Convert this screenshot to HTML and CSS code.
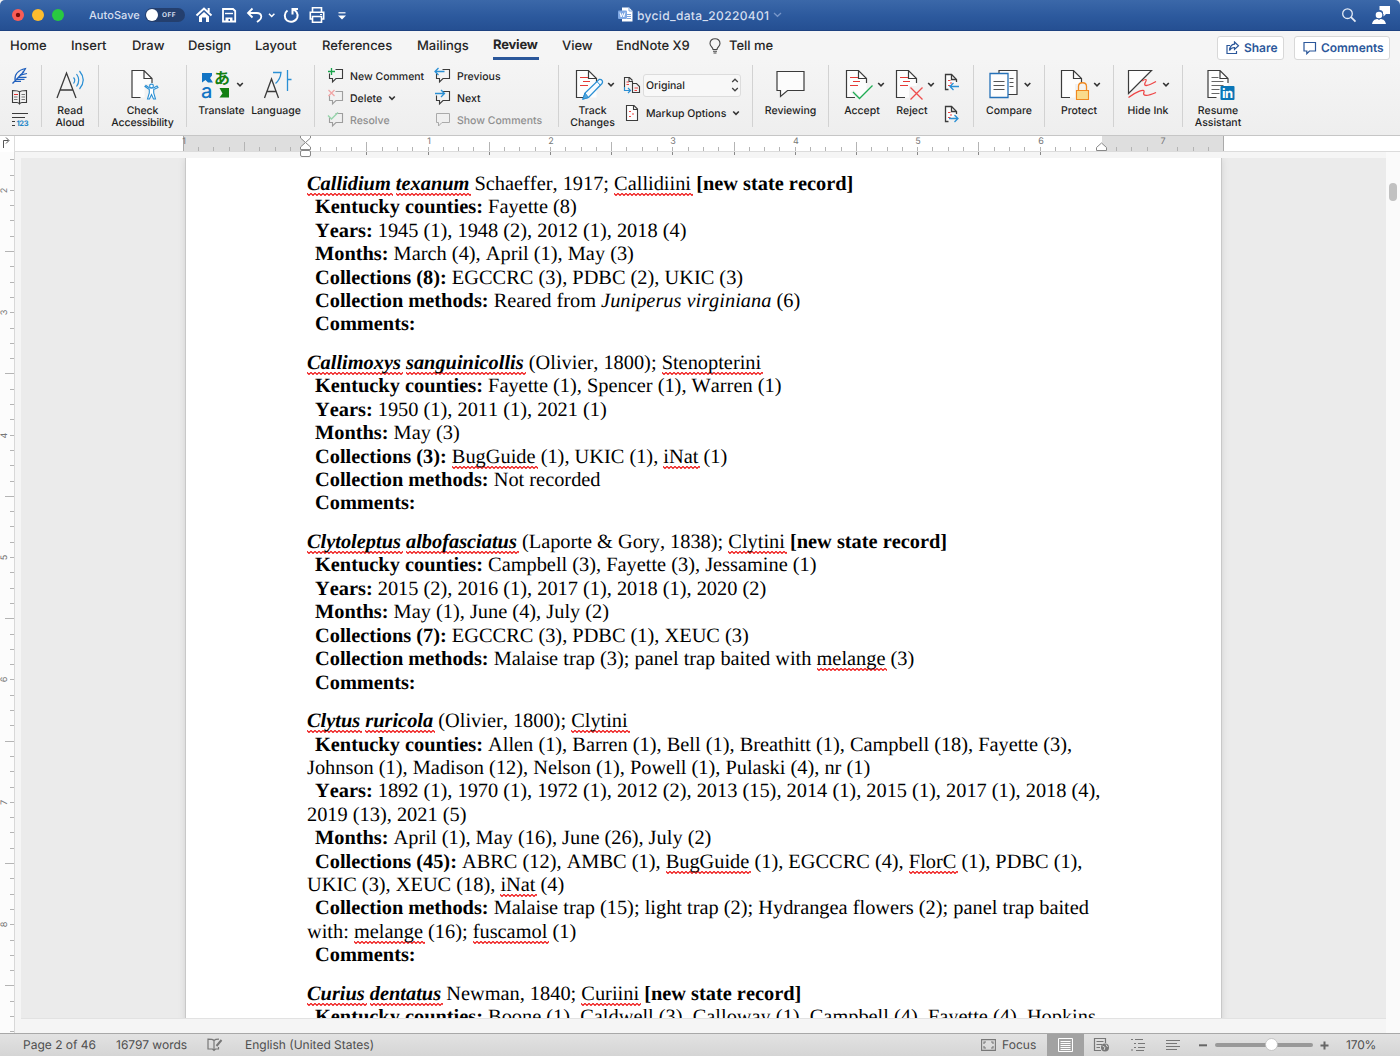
FILE: index.html
```html
<!DOCTYPE html>
<html lang="en">
<head>
<meta charset="utf-8">
<title>bycid_data_20220401</title>
<link rel="stylesheet" href="styles.css">
</head>
<body>
<svg width="0" height="0" class="defs">
  <defs>
    <path id="chev" d="M-2.8-1.5L0 1.3L2.8-1.5" fill="none" stroke="#333" stroke-width="1.6"/>
    <path id="bubble" d="M1.500 5.500V10.500H4.500V14L8 10.500H14.500V1.500H7.500" fill="none" stroke="#3b3b3b" stroke-width="1.1"/>
    <g id="sheet"><path d="M.5.5H12.5L20.500 8.500V27.500H.5Z" fill="#fdfdfd" stroke="none"/><path d="M20.500 13V8.500L12.500.5H.5V27.500H9M12.500.5V8.500H20.500" fill="none" stroke="#3b3b3b" stroke-width="1.2"/></g>
    <g id="minisheet"><path d="M3.500 15.500H.5V.5H6.500L11.500 5.500V8" fill="#fdfdfd" stroke="#3b3b3b"/><path d="M6.500.5V5.500H11" fill="none" stroke="#3b3b3b"/><path d="M3 6.500H5.500M5 9H7M3 11.500H5.500" stroke="#e44" stroke-width="1.2"/></g>
  </defs>
</svg>
<div class="window">
  <header class="titlebar">
    <div class="lights"><i class="red"></i><i class="yellow"></i><i class="green"></i></div>
    <span class="autosave">AutoSave</span>
    <span class="switch"><i></i>OFF</span>
    <svg class="quick" width="160" height="31" viewBox="192 0 160 31" fill="none" stroke="#fff" stroke-width="1.8">
      <path d="M196.500 15.500L204 8.500L211.500 15.500M208.700 8v4" stroke-width="2"/><path d="M199 16.500L204 12L209 16.500V22H206V17.500H202V22H199Z" fill="#fff" stroke="none"/>
      <path d="M223 9H233L235.200 11V21.500H223Z"/><path d="M225.500 17.500H232.500V22H225.500Z" fill="#fff" stroke="none"/><path d="M225 13.500H233" stroke-width="1.400"/><path d="M228.500 19h1.500v2h-1.500z" fill="#2d579b" stroke="none"/>
      <path d="M252.500 8.500L248 13L252.500 17.500M248.500 13H257C262 13 262.500 18 259 20.500L257 22"/>
      <path d="M269 13.800L271.700 16.500L274.400 13.800" stroke-width="1.5"/>
      <path d="M287.500 10.500C284 13 284 18 287 20.500C290.500 23 296 21.500 297.300 17.500C298.500 13.500 296 10.200 292.800 9.300M298 9H292.500V14.500" stroke-width="2"/>
      <path d="M312.500 12V7.800H321.500V12M312.500 19H310.300V12.300H323.700V19H321.500M312.500 16.500H321.500V22.200H312.500Z" stroke-width="1.6"/><path d="M320 14.500h2" stroke-width="1"/>
      <path d="M338.500 12.800H345.500" stroke-width="1.2"/><path d="M338 15.500H346L342 19.500Z" fill="#fff" stroke="none"/>
    </svg>
    <div class="doctitle">
      <svg width="16" height="16" viewBox="0 0 16 16"><path d="M4 .5H11L14.500 4V14.500H4Z" fill="#fff"/><path d="M11 .5V4H14.500M9 7.500H13M9 9.500H13M9 11.500H13" fill="none" stroke="#7da3dc"/><rect y="3.500" width="9" height="8.500" rx="1" fill="#7fa8e4"/><path d="M2 5.500L3.200 10L4.500 6.500L5.800 10L7 5.500" fill="none" stroke="#fff"/></svg>
      <span>bycid_data_20220401</span>
      <svg width="9" height="6" viewBox="0 0 9 6"><path d="M1 1L4.500 4.300L8 1" fill="none" stroke="#7896c8" stroke-width="1.300"/></svg>
    </div>
    <svg class="account" width="60" height="31" viewBox="1340 0 60 31" fill="none" stroke="#e4ebf6" stroke-width="1.300"><circle cx="1347.500" cy="13.700" r="4.800"/><path d="M1351 17.200L1355.500 21.700" stroke-width="1.700"/><g fill="#fff" stroke="none"><path d="M1379.500 6H1390V14H1386L1383.500 16.500V14H1383C1383.500 11.500 1382 10 1379.500 10Z"/><circle cx="1379" cy="15" r="3.300"/><path d="M1372 24C1373 19.500 1376 19 1377.500 19L1379 20L1380.500 19C1382 19 1385 19.500 1386 24Z"/></g></svg>
  </header>

  <nav class="tabs">
    <span class="t1">Home</span><span class="t2">Insert</span><span class="t3">Draw</span><span class="t4">Design</span><span class="t5">Layout</span><span class="t6">References</span><span class="t7">Mailings</span><span class="t8 on">Review</span><span class="t9">View</span><span class="t10">EndNote X9</span>
    <svg class="bulb" width="12" height="16" viewBox="0 0 12 16" fill="none" stroke="#444" stroke-width="1.100"><path d="M4 11.500C4 9 1 8.500 1 5.500C1 2.500 3 .8 6 .8C9 .8 11 2.500 11 5.500C11 8.500 8 9 8 11.500ZM4 13.200H8M4.500 15H7.500"/></svg>
    <span class="tell">Tell me</span>
    <span class="pill share"><svg width="14" height="14" viewBox="0 0 14 14" fill="none" stroke="#2b579a" stroke-width="1.200"><path d="M4 4.500H1V12.500H10.500V10M8.500 1L12.500 4.800L8.500 8.500V6.500C6 6.500 4.500 7.500 3.500 9.500C3.800 6 5.500 3.500 8.500 3.200Z"/></svg>Share</span>
    <span class="pill comments"><svg width="14" height="14" viewBox="0 0 14 14" fill="none" stroke="#2b579a" stroke-width="1.200"><path d="M1 1.500H12.500V10H6.500L3.800 12.700V10H1Z"/></svg>Comments</span>
  </nav>

  <section class="ribbon">
    <div class="group g1">
      <svg width="41" height="66" viewBox="0 64 41 66" fill="none"><path d="M12.500 83.500L24 71.500" stroke="#1f5fbd" stroke-width="1.300"/><path d="M15 80C14.500 74 19 70 25.500 68.500C24.500 71 24 71.500 22.500 72.500" stroke="#1f5fbd" stroke-width="1.200"/><path d="M20 75.200L27 73.500M18.500 77.300H26.500M17 79.300H24.500M15 81.300H21" stroke="#1f5fbd" stroke-width="1.200"/>
      <path d="M19.500 92V104M19.500 92C18.500 90.800 17 90.500 12.500 90.500V102.500H17C18.500 102.500 19.500 104 19.500 104C19.500 104 20.500 102.500 22 102.500H26.500V90.500C22 90.500 20.500 90.800 19.500 92Z" stroke="#3b3b3b" stroke-width="1.100"/><path d="M21.500 94.500H25M21.500 97H25M21.500 99.500H25M14 97H17.500M14 99.500H17.500" stroke="#777"/><path d="M14 94.500H18" stroke="#d33"/>
      <path d="M12 113.500H28M12 117.500H25M12 121.500H15M12 125.500H15" stroke="#3b3b3b" stroke-width="1.100"/><text x="16.500" y="126" font-size="7.500" font-weight="700" fill="#2386c8" textLength="12">123</text></svg>
    </div>
    <div class="group g2"><div class="btn"><svg width="57" height="38" viewBox="42 66 57 38" fill="none" stroke="#3b3b3b" stroke-width="1.300"><path d="M57 98L66.500 73L76 98M60.200 90H72.800"/><path d="M73.500 77.500Q76 80 73.500 83.500M76.500 74Q81 80 76.500 86.500M79.500 71Q87 80 79.500 89" stroke="#2a8fd4" stroke-width="1.200"/></svg><span>Read<br>Aloud</span></div></div>
    <div class="group g3"><div class="btn"><svg width="88" height="38" viewBox="98.500 66 88 38" fill="none"><use href="#sheet" x="131" y="70"/><path d="M144 84L158 84V100H144Z" fill="#f2f2f2"/><g stroke="#2a8fd4" stroke-width="1.100" fill="#fff"><path d="M144.500 86.500L148.800 89.500V93L147 99H149L151 94.500L153 99H155L153.200 93V89.500L157.500 87.500L156.500 86L153 88H149L145.500 85.500Z"/><circle cx="151" cy="86" r="1.900"/></g></svg><span>Check<br>Accessibility</span></div></div>
    <div class="group g4">
      <div class="btn translate"><svg width="50" height="38" viewBox="197 66 50 38" fill="none"><path d="M202 73H212V75.500L210 78L213 82.500H208L205.500 80L202 82.500Z" fill="#1274c4"/><text x="201" y="97.500" font-size="20" font-weight="500" fill="#1274c4">a</text><text x="214" y="83.500" class="cjk" font-size="16" font-weight="700" fill="#138013">あ</text><path d="M219.500 88H229V97.500H219.500L222.500 93.500Z" fill="#138013"/><use href="#chev" x="240" y="84.500"/></svg><span>Translate</span></div>
      <div class="btn language"><svg width="54" height="38" viewBox="249.500 66 54 38" fill="none"><path d="M264 98L271 79L278 98M266.300 91.500H275.700" stroke="#3b3b3b" stroke-width="1.300"/><path d="M272.500 72.500H280.500C280 78 278 81 275 83.500M287 70V91M287 79.500H291" stroke="#2a8fd4" stroke-width="1.300"/></svg><span>Language</span></div>
    </div>
    <div class="group g5">
      <div class="row a"><svg width="18" height="18" viewBox="0 0 18 18"><use href="#bubble" x="1" y="1"/><path d="M4.500 1V8M1 4.500H8" stroke="#18a34a" stroke-width="1.300"/></svg><span>New Comment</span></div>
      <div class="row b"><svg width="18" height="18" viewBox="0 0 18 18"><use href="#bubble" x="1" y="1"/><path d="M1 4.500H10" stroke="#f3f3f3" stroke-width="3"/><path d="M1 4.500H10.500M4.500 1L1 4.500L4.500 8" fill="none" stroke="#2a8fd4" stroke-width="1.300"/></svg><span>Previous</span></div>
      <div class="row a"><svg width="18" height="18" viewBox="0 0 18 18"><g opacity=".45"><use href="#bubble" x="1" y="1"/><path d="M1.500 1L7.500 7M7.500 1L1.500 7" stroke="#f04a4a" stroke-width="1.300"/></g></svg><span>Delete</span><svg class="dd" width="8" height="6" viewBox="-4 -3 8 6"><use href="#chev"/></svg></div>
      <div class="row b"><svg width="18" height="18" viewBox="0 0 18 18"><use href="#bubble" x="1" y="1"/><path d="M1 4.500H11" stroke="#f3f3f3" stroke-width="3"/><path d="M1 4.500H10.500M7 1L10.500 4.500L7 8" fill="none" stroke="#2a8fd4" stroke-width="1.300"/></svg><span>Next</span></div>
      <div class="row a off"><svg width="18" height="18" viewBox="0 0 18 18"><g opacity=".45"><use href="#bubble" x="1" y="1"/><path d="M1 4.500L4.500 8L11 1.500" fill="none" stroke="#2cb55a" stroke-width="1.400"/></g></svg><span>Resolve</span></div>
      <div class="row b off"><svg width="18" height="18" viewBox="0 0 18 18"><path d="M2.500 2.500H15.500V11.500H8L4.500 15V11.500H2.500Z" fill="none" stroke="#aaa"/></svg><span>Show Comments</span></div>
    </div>
    <div class="group g6">
      <div class="btn track"><svg width="60" height="38" viewBox="563 66 60 38" fill="none"><use href="#sheet" x="576" y="70"/><path d="M580 77.500H588M583 81.500H590M580 85.500H588" stroke="#e53935" stroke-width="1.200"/><path d="M583 99L585 93L599 79.500C602 79 603.500 81.500 602 83.500L588.500 97.500Z" fill="#f5fbff" stroke="#2a8fd4" stroke-width="1.300"/><path d="M583 99L585 93L588.500 97.500ZM597 81.500L600.500 85.500" fill="#58a8dc" stroke="#2a8fd4"/><use href="#chev" x="611" y="84.500"/></svg><span>Track<br>Changes</span></div>
      <div class="markup">
        <div class="line"><svg width="20" height="20" viewBox="622 75 20 20" fill="none"><path d="M624.500 87V77.500H629.500L632.500 80.500M629 77.500V81.500H632.500V84M632.500 92.500V83.500H636.500L639.500 86.500V92.500Z" stroke="#3b3b3b" stroke-width="1.100"/><path d="M626.500 82H629M626.500 84.500H629M634.500 88H638M634.500 90.500H637" stroke="#e44"/><path d="M624.500 87V90.500H630M628 88L630.500 90.500L628 93" stroke="#2a8fd4" stroke-width="1.200"/></svg><div class="select"><span>Original</span><svg width="8" height="14" viewBox="0 0 8 14" fill="none" stroke="#444" stroke-width="1.300"><path d="M1.200 4L4 1.200L6.800 4M1.200 10L4 12.800L6.800 10"/></svg></div></div>
        <div class="line two"><svg width="20" height="18" viewBox="622 104 20 18" fill="none"><path d="M626.500 105.500H634L637.500 109V120.500H626.500ZM633.500 105.500V109.500H637.500" fill="#fdfdfd" stroke="#3b3b3b" stroke-width="1.100"/><path d="M629 111.500H631M632 114H634M629 116.500H631" stroke="#e44" stroke-width="1.200"/></svg><span>Markup Options</span><svg class="dd" width="8" height="6" viewBox="-4 -3 8 6"><use href="#chev"/></svg></div>
      </div>
    </div>
    <div class="group g7"><div class="btn"><svg width="76" height="38" viewBox="752.500 66 76 38"><path d="M776.500 71.500H803.500V90.500H787L780 96.500V90.500H776.500Z" fill="#fcfcfc" stroke="#3b3b3b" stroke-width="1.200"/></svg><span>Reviewing</span></div></div>
    <div class="group g8">
      <div class="btn accept"><svg width="50" height="38" viewBox="837 66 50 38" fill="none"><use href="#sheet" x="846" y="70"/><path d="M852 91L860 100L874 86" stroke="#f3f3f3" stroke-width="4"/><path d="M850 77.500H858M853 81.500H860M850 85.500H858" stroke="#e53935" stroke-width="1.200"/><path d="M853 92L859.500 98.500L872.500 85.500" stroke="#1fac54" stroke-width="1.300"/><use href="#chev" x="881" y="84.500"/></svg><span>Accept</span></div>
      <div class="btn reject"><svg width="50" height="38" viewBox="887 66 50 38" fill="none"><use href="#sheet" x="896" y="70"/><path d="M909 86H923V101H909Z" fill="#f2f2f2"/><path d="M900 77.500H908M903 81.500H910M900 85.500H908" stroke="#e53935" stroke-width="1.200"/><path d="M910.500 87.500L922.500 99.500M922.500 87.500L910.500 99.500" stroke="#ee4d4d" stroke-width="1.300"/><use href="#chev" x="931" y="84.500"/></svg><span>Reject</span></div>
      <svg class="stack" width="20" height="60" viewBox="942 66 20 60" fill="none" stroke="#2a8fd4" stroke-width="1.300"><use href="#minisheet" x="945" y="74"/><path d="M950 86.500H959M953.500 83L950 86.500L953.500 90"/><use href="#minisheet" x="945" y="106"/><path d="M949 118.500H958M954.500 115L958 118.500L954.500 122"/></svg>
    </div>
    <div class="group g9"><div class="btn"><svg width="71" height="38" viewBox="973.500 66 71 38" fill="#fdfdfd"><path d="M998.500 70.500H1016.500V94.500H998.500Z" stroke="#3b3b3b" stroke-width="1.200"/><path d="M1009 78.500H1013M1009 82.500H1013M1009 86.500H1013" stroke="#555"/><path d="M989.500 73.500H1007.500V97.500H989.500Z" stroke="#2571b8" stroke-width="1.300"/><path d="M993 81.500H1004M993 85.500H1004M993 89.500H1004" stroke="#555"/><use href="#chev" x="1027" y="84.500"/></svg><span>Compare</span></div></div>
    <div class="group g10"><div class="btn"><svg width="69" height="38" viewBox="1045 66 69 38" fill="none"><use href="#sheet" x="1061" y="70"/><path d="M1075 84H1090V100H1075Z" fill="#f2f2f2"/><path d="M1078.500 90.500V86.500C1078.500 81.500 1086.500 81.500 1086.500 86.500V90.500" stroke="#f18a22" stroke-width="1.300"/><path d="M1076.500 90.500H1088.500V99.500H1076.500Z" fill="#f9db8b" stroke="#f18a22" stroke-width="1.100"/><use href="#chev" x="1097" y="84.500"/></svg><span>Protect</span></div></div>
    <div class="group g11"><div class="btn"><svg width="69" height="38" viewBox="1114 66 69 38" fill="none"><path d="M1128.500 70.500H1151.500L1128.500 93.500Z" fill="#fdfdfd" stroke="#3b3b3b" stroke-width="1.200"/><path d="M1142 81C1147 78 1147 80 1145 83C1143.500 87 1148 86 1156 81.500M1128.500 97.500C1136 92 1145 88 1144 92C1142 97 1148 96 1156 92.500" stroke="#ee4444" stroke-width="1.300"/><use href="#chev" x="1166" y="84.500"/></svg><span>Hide Ink</span></div></div>
    <div class="group g12"><div class="btn"><svg width="69" height="38" viewBox="1183.500 66 69 38" fill="none"><use href="#sheet" x="1207" y="70"/><path d="M1211 77.500H1218M1211 81.500H1223M1211 85.500H1223M1211 89.500H1219M1211 93.500H1219" stroke="#666"/><rect x="1220" y="86" width="14" height="14" rx="1" fill="#0a76b7"/><text x="1221.500" y="98" font-size="13" font-weight="700" fill="#fff" textLength="11">in</text></svg><span>Resume<br>Assistant</span></div></div>
  </section>

  <div class="rulerbar">
    <svg width="14" height="16" viewBox="0 0 14 16" fill="none" stroke="#555"><path d="M3.500 12V4.500H8.500M6 1.500L9 4.500L6 7.500"/></svg>
    <svg class="hruler" id="hruler" width="1386" height="22" viewBox="14 136 1386 22"></svg>
  </div>

  <main class="work">
    <svg class="vruler" id="vruler" width="15" height="881" viewBox="0 152 15 881"></svg>
    <div class="canvas">
      <article class="page">
        <section>
          <p class="name"><b class="sp"><u>Callidium</u> <u>texanum</u></b> Schaeffer, 1917; <u>Callidiini</u> <b>[new state record]</b></p>
          <p><b>Kentucky counties:</b> Fayette (8)</p>
          <p><b>Years:</b> 1945 (1), 1948 (2), 2012 (1), 2018 (4)</p>
          <p><b>Months:</b> March (4), April (1), May (3)</p>
          <p><b>Collections (8):</b> EGCCRC (3), PDBC (2), UKIC (3)</p>
          <p><b>Collection methods:</b> Reared from <i>Juniperus virginiana</i> (6)</p>
          <p><b>Comments:</b></p>
        </section>
        <section>
          <p class="name"><b class="sp"><u>Callimoxys</u> <u>sanguinicollis</u></b> (Olivier, 1800); <u>Stenopterini</u></p>
          <p><b>Kentucky counties:</b> Fayette (1), Spencer (1), Warren (1)</p>
          <p><b>Years:</b> 1950 (1), 2011 (1), 2021 (1)</p>
          <p><b>Months:</b> May (3)</p>
          <p><b>Collections (3):</b> <u>BugGuide</u> (1), UKIC (1), <u>iNat</u> (1)</p>
          <p><b>Collection methods:</b> Not recorded</p>
          <p><b>Comments:</b></p>
        </section>
        <section>
          <p class="name"><b class="sp"><u>Clytoleptus</u> <u>albofasciatus</u></b> (Laporte &amp; Gory, 1838); <u>Clytini</u> <b>[new state record]</b></p>
          <p><b>Kentucky counties:</b> Campbell (3), Fayette (3), Jessamine (1)</p>
          <p><b>Years:</b> 2015 (2), 2016 (1), 2017 (1), 2018 (1), 2020 (2)</p>
          <p><b>Months:</b> May (1), June (4), July (2)</p>
          <p><b>Collections (7):</b> EGCCRC (3), PDBC (1), XEUC (3)</p>
          <p><b>Collection methods:</b> Malaise trap (3); panel trap baited with <u>melange</u> (3)</p>
          <p><b>Comments:</b></p>
        </section>
        <section>
          <p class="name"><b class="sp"><u>Clytus</u> <u>ruricola</u></b> (Olivier, 1800); <u>Clytini</u></p>
          <p><b>Kentucky counties:</b> Allen (1), Barren (1), Bell (1), Breathitt (1), Campbell (18), Fayette (3),<br>Johnson (1), Madison (12), Nelson (1), Powell (1), Pulaski (4), nr (1)</p>
          <p><b>Years:</b> 1892 (1), 1970 (1), 1972 (1), 2012 (2), 2013 (15), 2014 (1), 2015 (1), 2017 (1), 2018 (4),<br>2019 (13), 2021 (5)</p>
          <p><b>Months:</b> April (1), May (16), June (26), July (2)</p>
          <p><b>Collections (45):</b> ABRC (12), AMBC (1), <u>BugGuide</u> (1), EGCCRC (4), <u>FlorC</u> (1), PDBC (1),<br>UKIC (3), XEUC (18), <u>iNat</u> (4)</p>
          <p><b>Collection methods:</b> Malaise trap (15); light trap (2); Hydrangea flowers (2); panel trap baited<br>with: <u>melange</u> (16); <u>fuscamol</u> (1)</p>
          <p><b>Comments:</b></p>
        </section>
        <section>
          <p class="name"><b class="sp"><u>Curius</u> <u>dentatus</u></b> Newman, 1840; <u>Curiini</u> <b>[new state record]</b></p>
          <p><b>Kentucky counties:</b> Boone (1), Caldwell (3), Calloway (1), Campbell (4), Fayette (4), Hopkins</p>
        </section>
      </article>
    </div>
    <div class="vscroll"><i></i></div>
  </main>

  <footer class="status">
    <span class="pg">Page 2 of 46</span><span class="words">16797 words</span>
    <svg class="proof" width="16" height="14" viewBox="0 0 16 14" fill="none" stroke="#777" stroke-width="1.200"><path d="M7 12.500V2.500C6 1.500 5 1.200 1 1.200V11H5.500L7 12.500L8.500 11H11.500V9M7 2.500C8 1.500 9 1.200 12 1.200"/><path d="M9.500 8L14.500 2" stroke-width="2"/></svg>
    <span class="lang">English (United States)</span>
    <svg class="focusicon" width="15" height="12" viewBox="0 0 15 12" fill="none" stroke="#777" stroke-width="1.100"><path d="M.6.6H14.400V11.400H.6ZM3 5V3H5M10 3H12V5M12 7V9H10M5 9H3V7"/></svg>
    <span class="focus">Focus</span>
    <span class="view"><svg width="15" height="14" viewBox="0 0 15 14" fill="none" stroke="#fff"><path d="M.5.5H14.500V13.500H.5ZM2.500 3.500H12.500M2.500 5.500H12.500M2.500 7.500H12.500M2.500 9.500H12.500M2.500 11.500H12.500"/></svg></span>
    <svg width="240" height="22" viewBox="1084 1034 240 22" fill="none" stroke="#777" stroke-width="1.200"><path d="M1101 1050.500H1094.500V1038.500H1105.500V1043M1096.500 1041.500H1103.500M1096.500 1044.500H1102M1096.500 1047.500H1100"/><circle cx="1105" cy="1047.500" r="4" fill="#777" stroke="none"/><path d="M1102.500 1046L1105 1047.500L1104 1050M1106 1044.500L1107.500 1047" stroke="#ddd" stroke-width="1"/>
    <path d="M1131 1039.500H1133M1135 1039.500H1143M1134 1043.500H1136M1138 1043.500H1145M1134 1047.500H1136M1138 1047.500H1145M1131 1050H1133M1136 1050.500H1144M1166 1040.500H1180M1166 1043.500H1177M1166 1046.500H1180M1166 1049.500H1177"/><path d="M1199 1045.300H1207" stroke="#666" stroke-width="2"/><path d="M1217 1045H1311" stroke="#999" stroke-width="4" stroke-linecap="round"/><circle cx="1271.500" cy="1044.500" r="6" fill="#fff" stroke="#bbb" stroke-width=".8"/></svg>
    <svg class="plus" width="9" height="9" viewBox="0 0 9 9"><path d="M.5 4.500H8.500M4.500.5V8.500" stroke="#666" stroke-width="2"/></svg>
    <span class="zoom">170%</span>
  </footer>
</div>
<script src="ruler.js"></script>
</body>
</html>
```
FILE: styles.css
```css
* { box-sizing: border-box; }
body { margin: 0; font-family: Inter, "Liberation Sans", sans-serif; text-rendering: geometricPrecision; }
svg { display: block; flex: none; }
.cjk { font-family: "Noto Sans CJK JP", sans-serif; }
.defs { display: none; }
.window { width: 1400px; height: 1056px; display: flex; flex-direction: column; overflow: hidden; background: #f3f3f3; }

.titlebar { height: 31px; flex: none; display: flex; align-items: center; background: linear-gradient(#3b68a9, #2c599d 55%, #254f92); border-bottom: 1px solid #1d4280; color: #d5dff0; border-radius: 5px 5px 0 0; }
.lights { display: flex; gap: 8px; padding-left: 12px; width: 89px; }
.lights i { width: 12px; height: 12px; border-radius: 50%; }
.red { background: radial-gradient(circle, #7b0c08 0 1.8px, #fb5d56 2.6px); }
.yellow { background: #fdbc2f; }
.green { background: #29c940; }
.autosave { width: 56px; font-size: 11px; font-weight: 500; letter-spacing: .05px; }
.switch { width: 40px; height: 14px; border-radius: 7px; background: #243f6e; display: flex; align-items: center; gap: 4px; font-size: 6.500px; font-weight: 700; letter-spacing: .5px; }
.switch i { width: 12px; height: 12px; margin-left: 1px; border-radius: 50%; background: #fff; }
.quick { margin-left: 7px; }
.doctitle { display: flex; align-items: center; gap: 3px; margin-left: 266px; font-size: 12px; font-weight: 500; }
.doctitle span { width: 133px; letter-spacing: .34px; }
.account { margin-left: auto; }

.tabs { height: 29px; flex: none; display: flex; align-items: center; padding-left: 10px; background: #f5f5f5; font-size: 13px; font-weight: 500; color: #262626; letter-spacing: -.03px; white-space: nowrap; }
.t1, .t2 { width: 61px; } .t3 { width: 56px; } .t4, .t5 { width: 67px; } .t6 { width: 95px; } .t7 { width: 76px; } .t9 { width: 54px; } .t10 { width: 93px; }
.on { width: 46px; margin-right: 23px; height: 29px; line-height: 29px; font-weight: 700; letter-spacing: -.2px; background: linear-gradient(#2b579a, #2b579a) bottom / 100% 3px no-repeat; }
.tell { margin-left: 8px; }
.pill { height: 24px; margin-top: 4px; border: 1px solid #d8d8d8; border-radius: 3px; background: #fff; color: #2b579a; font-size: 12px; font-weight: 600; display: flex; align-items: center; gap: 4px; padding-left: 8px; }
.share { width: 67px; margin-left: auto; }
.comments { width: 96px; margin: 4px 10px 0 10px; }

.ribbon { height: 75px; flex: none; display: flex; background: linear-gradient(#f5f5f5, #eeeeee); color: #1e1e1e; font-size: 10.500px; letter-spacing: 0; font-weight: 500; }
.group { height: 75px; display: flex; background: linear-gradient(#d2d2d2, #d2d2d2) right 5px / 1px 62px no-repeat; }
.group:last-child { background: none; }
.g1 { width: 42px; padding-top: 4px; } .g2 { width: 57px; } .g3 { width: 88px; } .g4 { width: 128px; padding-left: 10px; } .g5 { width: 244px; }
.g6 { width: 194px; padding-left: 4px; } .g7 { width: 76px; } .g8 { width: 145px; padding-left: 8px; } .g9 { width: 71px; } .g10, .g11 { width: 69px; } .g12 { width: 71px; }
.btn { padding-top: 6px; display: flex; flex-direction: column; align-items: center; text-align: center; line-height: 12px; margin: 0 auto; white-space: nowrap; }
.btn span { margin: 1px 1px 0 0; }
.g3 .btn span { letter-spacing: -.12px; }
.translate, .accept, .reject, .track { margin: 0; } .language { margin: 0 0 0 2.500px; }
.accept span, .reject span { margin-right: 0; }
.g5 { display: grid; grid-template-columns: 107px 1fr; grid-template-rows: repeat(3, 22px); padding: 5px 0 0 12px; }
.row { display: flex; align-items: center; gap: 5px; white-space: nowrap; }
.row svg:first-child { margin-top: -1px; }
.row .dd { margin-left: 1px; }
.row.off { color: #8e8e8e; }
.markup { display: flex; flex-direction: column; padding-top: 13px; white-space: nowrap; margin-left: -1px; }
.line { display: flex; align-items: center; height: 24px; }
.line.two { height: 20px; margin-top: 6px; gap: 4px; }
.line.two .dd { margin-left: 2px; }
.select { width: 98px; height: 23px; border: 1px solid #dcdcdc; border-radius: 3px; background: #f8f8f8; display: flex; align-items: center; justify-content: space-between; padding: 0 1px 0 2px; margin-left: 1px; }
.stack { margin: 6px 0 0 5px; }

.rulerbar { height: 17px; flex: none; display: flex; background: #fff; border-top: 1px solid #c6c6c6; position: relative; z-index: 2; }
.hruler { overflow: visible; }
.hruler text, .vruler text { font-size: 9px; fill: #777; text-anchor: middle; }

.work { flex: 1; min-height: 0; display: flex; background: #f5f5f5; }
.canvas { width: 1365px; height: 861px; margin: 6px 0 0 6px; background: #ebebeb; overflow: hidden; padding-left: 165px; border-bottom: 1px solid #e2e2e2; }
.page { width: 1035px; height: 1300px; background: #fff; box-shadow: 0 0 0 1px #c8c8c8, 0 0 8px rgba(0,0,0,.13); padding: 15px 0 0 121px; font-family: "Liberation Serif", serif; font-size: 20.370px; line-height: 23.400px; font-kerning: none; color: #000; white-space: nowrap; }
.page section { margin-bottom: 15.200px; }
.page p { margin: 0; text-indent: 8px; }
.page .name { text-indent: 0; }
.sp { font-style: italic; }
u { text-decoration: none; padding: 0 2px 1px 0; margin-right: -2px; background: url("data:image/svg+xml,%3Csvg xmlns='http://www.w3.org/2000/svg' width='4' height='3'%3E%3Cpath d='M-1 -.5L0 .5L2 2.500L4 .5L5 -.5' fill='none' stroke='%23ee1111' stroke-width='1.1'/%3E%3C/svg%3E") left bottom repeat-x; }
.vscroll { width: 14px; background: #fafafa; padding: 31px 0 0 3px; }
.vscroll i { display: block; width: 8px; height: 18px; border-radius: 4px; background: #c1c1c1; }

.status { height: 23px; flex: none; display: flex; align-items: center; padding-left: 23px; border-top: 1px solid #a8a8a8; background: linear-gradient(#e2e2e2, #d5d5d5); font-size: 12px; color: #4e4e4e; white-space: nowrap; }
.status > span:not(.view) { margin-top: -2px; }
.pg { width: 93px; } .words { width: 91px; } .lang { width: 758px; padding-left: 22px; }
.focus { width: 51px; padding-left: 6px; letter-spacing: .05px; }
.view { width: 37px; height: 22px; background: #a2a2a2; display: flex; align-items: center; justify-content: center; }
.plus { margin-left: -4px; }
.zoom { margin-left: 17px; letter-spacing: -.15px; }
```
FILE: ruler.js
```js
const INCH = 122.4;
const line = (x1, y1, x2, y2, c) => `<path d="M${x1} ${y1}L${x2} ${y2}" stroke="${c}"/>`;

// Horizontal ruler: margins shaded, one tick each eighth of an inch.
let h = '<rect x="183" y="136" width="123" height="15" fill="#dedede"/>' +
  '<rect x="1102" y="136" width="122" height="15" fill="#dedede"/>' + line(14.5, 136, 14.5, 152, '#dcdcdc') +
  line(15, 151.5, 1400, 151.5, '#dcdcdc') + line(183.5, 136, 183.5, 151, '#aaa') + line(1223.5, 136, 1223.5, 151, '#aaa');
for (let i = -7; i < 60; i++) {
  if (i === 0 || i === 52) continue;
  const x = Math.floor(305.6 + i * INCH / 8) + 0.5;
  const body = i > 0 && i < 52;
  const half = Math.abs(i % 8) === 4;
  if (i % 8 === 0) h += `<text x="${x + 0.5}" y="144">${i / 8}</text>`;
  if (i % 8 !== 0 || body) h += line(x, half && i < 52 ? 142 : 147, x, 151, '#b4b4b4');
  if (body && i % 4 === 0) h += line(x, 152, x, 155, '#888');
}
h += '<text x="184" y="144">1</text><g fill="#fff" stroke="#888">' +
  '<path d="M300.500 136V138L305.500 142.500L310.500 138V136"/>' +
  '<path d="M300.500 149.500V147L305.500 142.500L310.500 147V149.500Z"/>' +
  '<rect x="300.500" y="150.500" width="10" height="6" rx="1.500"/>' +
  '<path d="M1096.500 150.500V147.500L1101.500 143L1106.500 147.500V150.500Z"/></g>';
document.getElementById('hruler').innerHTML = h;

// Vertical ruler: inch marks numbered from 2 at the top of the view.
let v = '<rect x="0" y="152" width="15" height="881" fill="#fcfcfc"/>' + line(14.5, 152, 14.5, 1033, '#d8d8d8');
for (let i = -2; i < 56; i++) {
  const y = Math.floor(190.3 + i * INCH / 8) + 0.5;
  v += line(Math.abs(i % 8) === 4 ? 5 : 10, y, 14, y, '#b4b4b4');
  if (i % 8 === 0) v += `<text transform="translate(7 ${y}) rotate(-90)">${i / 8 + 2}</text>`;
}
document.getElementById('vruler').innerHTML = v;
```
